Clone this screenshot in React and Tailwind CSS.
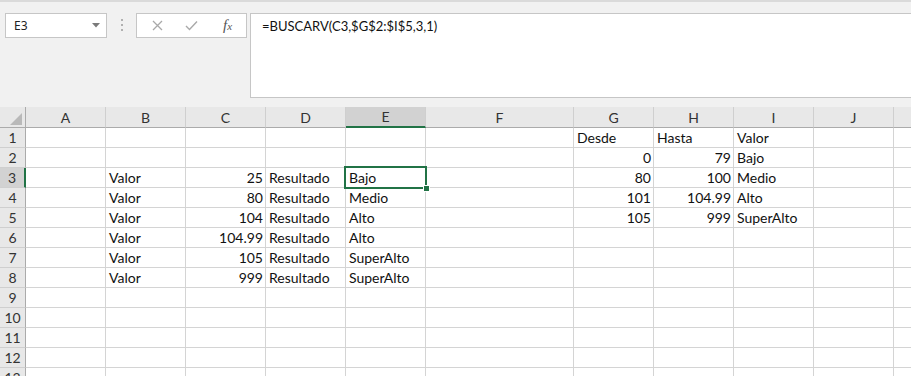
import React from 'react'

const cols = ['A', 'B', 'C', 'D', 'E', 'F', 'G', 'H', 'I', 'J', 'K']

// cell values keyed by column letter; numbers are right-aligned like in a sheet
const data = {
  1: { G: 'Desde', H: 'Hasta', I: 'Valor' },
  2: { G: 0, H: 79, I: 'Bajo' },
  3: { B: 'Valor', C: 25, D: 'Resultado', E: 'Bajo', G: 80, H: 100, I: 'Medio' },
  4: { B: 'Valor', C: 80, D: 'Resultado', E: 'Medio', G: 101, H: 104.99, I: 'Alto' },
  5: { B: 'Valor', C: 104, D: 'Resultado', E: 'Alto', G: 105, H: 999, I: 'SuperAlto' },
  6: { B: 'Valor', C: 104.99, D: 'Resultado', E: 'Alto' },
  7: { B: 'Valor', C: 105, D: 'Resultado', E: 'SuperAlto' },
  8: { B: 'Valor', C: 999, D: 'Resultado', E: 'SuperAlto' },
}

const rows = [1, 2, 3, 4, 5, 6, 7, 8, 9, 10, 11, 12, 13]

function ColHeader({ name }) {
  const active = name === 'E'
  return (
    <div
      className={
        'h-[21px] flex items-center justify-center text-[14px] text-[#333] border-r border-[#cfcfcf] ' +
        (active ? 'bg-[#d2d2d2] border-b-2 border-b-[#217346]' : 'bg-[#e8e8e8] border-b border-b-[#ababab]')
      }
    >
      {name}
    </div>
  )
}

function RowHeader({ n }) {
  const active = n === 3
  return (
    <div
      className={
        'h-[20px] leading-[19px] text-center text-[14px] text-[#333] border-b border-[#cfcfcf] ' +
        (active ? 'bg-[#d2d2d2] border-r-2 border-r-[#217346]' : 'bg-[#e8e8e8] border-r border-r-[#ababab]')
      }
    >
      {n}
    </div>
  )
}

function Cell({ value }) {
  const isNum = typeof value === 'number'
  return (
    <div
      className={
        'h-[20px] leading-[19px] px-[2px] text-[14px] text-[#111] whitespace-nowrap overflow-hidden border-r border-b border-[#d4d4d4] ' +
        (isNum ? 'text-right' : 'text-left pl-[3px]')
      }
    >
      {value}
    </div>
  )
}

export default function App() {
  return (
    <div className="w-[911px] h-[376px] overflow-hidden bg-white" style={{ fontFamily: 'Lato, "Liberation Sans", sans-serif' }}>
      {/* Formula bar area */}
      <div className="h-[107px] bg-[#f1f1f1] border-t-2 border-[#dadada] flex items-start pt-[11px]">
        <div
          className="ml-[5px] w-[102px] h-[25px] bg-white border border-[#c6c6c6] flex items-center justify-between pl-[8px] pr-[6px] text-[12px] text-[#222]"
          style={{ fontFamily: '"Noto Sans", sans-serif' }}
        >
          <span>E3</span>
          <svg width="8" height="5" viewBox="0 0 8 5">
            <polygon points="0,0 8,0 4,4.5" fill="#7a7a7a" />
          </svg>
        </div>
        <div className="ml-[14px] mt-[6px] flex flex-col gap-[3px]">
          <span className="w-[2px] h-[2px] bg-[#b0b0b0]" />
          <span className="w-[2px] h-[2px] bg-[#b0b0b0]" />
          <span className="w-[2px] h-[2px] bg-[#b0b0b0]" />
        </div>
        <div className="ml-[13px] w-[111px] h-[25px] bg-white border border-[#c6c6c6] flex items-center">
          <svg className="ml-[15px]" width="11" height="11" viewBox="0 0 11 11">
            <path d="M1 1L10 10M10 1L1 10" stroke="#a9a9a9" strokeWidth="1.3" />
          </svg>
          <svg className="ml-[22px]" width="13" height="11" viewBox="0 0 13 11">
            <path d="M1 6L4.5 9.5L12 1.5" stroke="#a9a9a9" strokeWidth="1.4" fill="none" />
          </svg>
          <span
            className="ml-[25px] italic text-[15px] text-[#555]"
            style={{ fontFamily: '"Liberation Serif", serif' }}
          >
            f<span className="text-[11px]">x</span>
          </span>
        </div>
        <div className="ml-[3px] flex-1 h-[85px] bg-white border-l border-y border-[#c6c6c6] pl-[11px] pt-[3px] text-[13px] text-[#111]">
          =BUSCARV(C3,$G$2:$I$5,3,1)
        </div>
      </div>

      {/* Sheet grid */}
      <div className="relative">
        <div className="grid grid-cols-[26px_80px_80px_80px_80px_80px_148px_80px_80px_80px_80px_80px] bg-white">
          <div className="h-[21px] bg-[#e8e8e8] border-r border-b border-[#ababab] flex items-end justify-end pr-[3px] pb-[2px]">
            <svg width="12" height="12" viewBox="0 0 12 12">
              <polygon points="12,0 12,12 0,12" fill="#b9b9b9" />
            </svg>
          </div>
          {cols.map((c) => (
            <ColHeader key={c} name={c} />
          ))}
          {rows.map((r) => (
            <React.Fragment key={r}>
              <RowHeader n={r} />
              {cols.map((c) => (
                <Cell key={c} value={data[r]?.[c]} />
              ))}
            </React.Fragment>
          ))}
        </div>

        {/* active cell E3 */}
        <div className="absolute left-[344px] top-[59px] w-[83px] h-[23px] border-2 border-[#217346] pointer-events-none" />
        <div className="absolute left-[423px] top-[78px] w-[7px] h-[7px] bg-[#217346] border border-white" />
      </div>
    </div>
  )
}
